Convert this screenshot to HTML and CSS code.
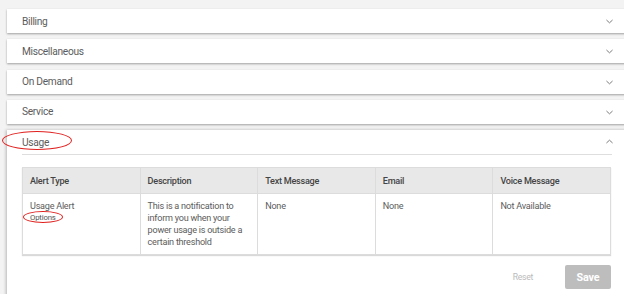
FILE: index.html
```html
<!DOCTYPE html>
<html>
<head>
<meta charset="utf-8">
<link rel="stylesheet" href="styles.css">
</head>
<body>
<div class="page">
  <div class="panel"><span>Billing</span><svg class="chev" viewBox="0 0 8 5"><path d="M0.5 0.8 L4 4 L7.5 0.8"/></svg></div>
  <div class="panel"><span>Miscellaneous</span><svg class="chev" viewBox="0 0 8 5"><path d="M0.5 0.8 L4 4 L7.5 0.8"/></svg></div>
  <div class="panel"><span>On Demand</span><svg class="chev" viewBox="0 0 8 5"><path d="M0.5 0.8 L4 4 L7.5 0.8"/></svg></div>
  <div class="panel"><span>Service</span><svg class="chev" viewBox="0 0 8 5"><path d="M0.5 0.8 L4 4 L7.5 0.8"/></svg></div>
  <div class="panel open">
    <div class="open-head">
      <span class="mark-wrap">Usage<i class="ring ring-usage"></i></span>
      <svg class="chev" viewBox="0 0 8 5"><path d="M0.5 4.2 L4 1 L7.5 4.2"/></svg>
    </div>
    <div class="body">
      <table class="alerts">
        <thead>
          <tr><th>Alert Type</th><th>Description</th><th>Text Message</th><th>Email</th><th>Voice Message</th></tr>
        </thead>
        <tbody>
          <tr>
            <td>Usage Alert<div class="opts"><span class="mark-wrap">Options<i class="ring ring-opt"></i></span></div></td>
            <td>This is a notification to inform you when your power usage is outside a certain threshold</td>
            <td>None</td>
            <td>None</td>
            <td>Not Available</td>
          </tr>
        </tbody>
      </table>
      <div class="actions">
        <span class="reset">Reset</span>
        <span class="save">Save</span>
      </div>
    </div>
  </div>
</div>
</body>
</html>
```
FILE: styles.css
```css
html, body {
  margin: 0;
  padding: 0;
  background: #f3f3f3;
  overflow: hidden;
  width: 624px;
  height: 294px;
}
.page {
  padding: 9px 0 0 7px;
  display: flex;
  flex-direction: column;
  gap: 6.3px;
  font-family: Roboto, "Liberation Sans", sans-serif;
  color: #5c5c5c;
}
.panel {
  background: #fff;
  box-shadow: 0 1px 2px rgba(0,0,0,0.35);
  width: 640px;
  height: 24px;
  display: flex;
  align-items: center;
  padding-left: 15px;
  box-sizing: border-box;
  font-size: 10.2px;
  letter-spacing: -0.3px;
  position: relative;
}
.chev {
  position: absolute;
  left: 599px;
  top: 10px;
  width: 7px;
  height: 5px;
  fill: none;
  stroke: #777;
  stroke-width: 1.1;
}
.panel.open {
  height: auto;
  display: block;
  padding: 0;
  box-shadow: -1px 0 3px rgba(0,0,0,0.25);
}
.open-head {
  margin: 0 12px 0 15px;
  width: 590px;
  height: 24px;
  display: flex;
  align-items: center;
  border-bottom: 1px solid #dedede;
  position: relative;
}
.open-head .chev {
  left: 584px;
  top: 9px;
}
.mark-wrap {
  position: relative;
}
.ring {
  position: absolute;
  border: 1px solid #e0201e;
  border-radius: 50%;
  box-sizing: border-box;
}
.ring-usage {
  left: -20px;
  top: -6px;
  width: 70px;
  height: 19px;
}
.ring-opt {
  left: -7px;
  top: -2px;
  width: 40px;
  height: 12px;
}
.body {
  padding: 12px 0 0 15px;
  height: 140px;
}
.alerts {
  border-collapse: collapse;
  width: 589px;
  table-layout: fixed;
  font-size: 9.1px;
  letter-spacing: -0.25px;
  box-shadow: 0 1px 1px rgba(0,0,0,0.15);
}
.alerts th, .alerts td {
  border: 1px solid #dcdcdc;
  text-align: left;
  padding: 0 3px 0 7px;
  vertical-align: top;
}
.alerts th {
  background: #e8e8e8;
  color: #444;
  font-weight: 500;
  height: 25px;
  vertical-align: middle;
}
.alerts td {
  color: #5c5c5c;
  line-height: 12px;
  padding-top: 6px;
  height: 54px;
}
.opts {
  font-size: 7.8px;
  letter-spacing: -0.2px;
  line-height: 10px;
  margin-top: 1px;
  color: #555;
}
.actions {
  display: flex;
  justify-content: flex-end;
  align-items: center;
  width: 589px;
  margin-top: 10px;
  gap: 32px;
}
.reset {
  font-size: 8.6px;
  color: #bbb;
}
.save {
  width: 46px;
  height: 24px;
  background: #bdbdbd;
  border-radius: 2px;
  color: #fff;
  font-weight: 700;
  font-size: 10.8px;
  letter-spacing: -0.2px;
  display: flex;
  align-items: center;
  justify-content: center;
}
```
